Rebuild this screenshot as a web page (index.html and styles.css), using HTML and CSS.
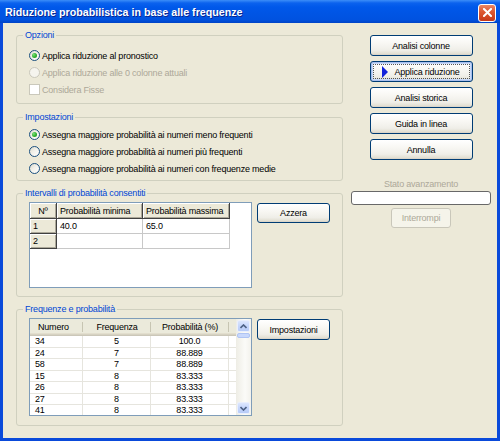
FILE: index.html
```html
<!DOCTYPE html>
<html lang="it">
<head>
<meta charset="utf-8">
<title>Riduzione probabilistica in base alle frequenze</title>
<link rel="stylesheet" href="styles.css">
</head>
<body>
<div class="window">
  <div class="titlebar">
    <span class="title">Riduzione probabilistica in base alle frequenze</span>
    <span class="close">
      <svg width="9" height="9" viewBox="0 0 9 9"><path d="M1 1 L8 8 M8 1 L1 8" stroke="#fff" stroke-width="2" stroke-linecap="square" fill="none"/></svg>
    </span>
  </div>
  <div class="client">
    <div class="left">
      <fieldset class="group g-opzioni">
        <legend>Opzioni</legend>
        <div class="opt"><span class="radio checked"></span>Applica riduzione al pronostico</div>
        <div class="opt disabled"><span class="radio"></span>Applica riduzione alle 0 colonne attuali</div>
        <div class="opt disabled"><span class="check"></span>Considera Fisse</div>
      </fieldset>
      <fieldset class="group g-impostazioni">
        <legend>Impostazioni</legend>
        <div class="opt"><span class="radio checked"></span>Assegna maggiore probabilità ai numeri meno frequenti</div>
        <div class="opt"><span class="radio"></span>Assegna maggiore probabilità ai numeri più frequenti</div>
        <div class="opt"><span class="radio"></span>Assegna maggiore probabilità ai numeri con frequenze medie</div>
      </fieldset>
      <fieldset class="group g-intervalli">
        <legend>Intervalli di probabilità consentiti</legend>
        <div class="group-row">
          <div class="sgrid">
            <div class="sgrid-table">
              <div class="fc center">Nº</div>
              <div class="fc">Probabilità minima</div>
              <div class="fc">Probabilità massima</div>
              <div class="fc">1</div>
              <div class="dc">40.0</div>
              <div class="dc">65.0</div>
              <div class="fc">2</div>
              <div class="dc"></div>
              <div class="dc"></div>
            </div>
          </div>
          <button class="btn btn-side">Azzera</button>
        </div>
      </fieldset>
      <fieldset class="group g-frequenze">
        <legend>Frequenze e probabilità</legend>
        <div class="group-row">
          <div class="lv">
            <div class="lv-main">
              <div class="lv-head">
                <div class="hc c1 left-text">Numero</div>
                <div class="hc c2">Frequenza</div>
                <div class="hc c3">Probabilità (%)</div>
                <div class="hc filler"></div>
              </div>
              <div class="lv-row"><div class="lc c1 left-text">34</div><div class="lc c2">5</div><div class="lc c3">100.0</div><div class="lc filler"></div></div>
              <div class="lv-row"><div class="lc c1 left-text">24</div><div class="lc c2">7</div><div class="lc c3">88.889</div><div class="lc filler"></div></div>
              <div class="lv-row"><div class="lc c1 left-text">58</div><div class="lc c2">7</div><div class="lc c3">88.889</div><div class="lc filler"></div></div>
              <div class="lv-row"><div class="lc c1 left-text">15</div><div class="lc c2">8</div><div class="lc c3">83.333</div><div class="lc filler"></div></div>
              <div class="lv-row"><div class="lc c1 left-text">26</div><div class="lc c2">8</div><div class="lc c3">83.333</div><div class="lc filler"></div></div>
              <div class="lv-row"><div class="lc c1 left-text">27</div><div class="lc c2">8</div><div class="lc c3">83.333</div><div class="lc filler"></div></div>
              <div class="lv-row"><div class="lc c1 left-text">41</div><div class="lc c2">8</div><div class="lc c3">83.333</div><div class="lc filler"></div></div>
            </div>
            <div class="sb">
              <div class="sb-btn">
                <svg width="7" height="5" viewBox="0 0 7 5"><path d="M0.5 4 L3.5 1 L6.5 4" stroke="#4D6185" stroke-width="1.6" fill="none"/></svg>
              </div>
              <div class="sb-thumb"></div>
              <div class="sb-track"></div>
              <div class="sb-btn">
                <svg width="7" height="5" viewBox="0 0 7 5"><path d="M0.5 1 L3.5 4 L6.5 1" stroke="#4D6185" stroke-width="1.6" fill="none"/></svg>
              </div>
            </div>
          </div>
          <button class="btn btn-side btn-tall">Impostazioni</button>
        </div>
      </fieldset>
    </div>
    <div class="right">
      <button class="btn btn-main">Analisi colonne</button>
      <button class="btn btn-main btn-default"><span class="arrow"></span>Applica riduzione</button>
      <button class="btn btn-main">Analisi storica</button>
      <button class="btn btn-main">Guida in linea</button>
      <button class="btn btn-main">Annulla</button>
      <div class="progress-label">Stato avanzamento</div>
      <div class="progress"></div>
      <button class="btn btn-disabled">Interrompi</button>
    </div>
  </div>
</div>
</body>
</html>
```
FILE: styles.css
```css
* { box-sizing: border-box; }
html, body { margin: 0; padding: 0; }
body {
  width: 500px;
  height: 441px;
  overflow: hidden;
  background: #fff;
  font-family: "Liberation Sans", Arial, sans-serif;
  font-size: 9px;
  letter-spacing: -0.2px;
  color: #000;
}
.window {
  width: 500px;
  height: 441px;
  display: flex;
  flex-direction: column;
}
.titlebar {
  height: 23px;
  display: flex;
  align-items: center;
  padding: 0 4px 0 5px;
  background: linear-gradient(180deg, #3C8EF8 0px, #0B62EE 3px, #0058EA 7px, #0055E5 55%, #0052E0 85%, #0043C6 100%);
}
.title {
  flex: 1;
  color: #fff;
  font-weight: bold;
  font-size: 10.7px;
  letter-spacing: 0;
  text-shadow: 1px 1px 0 #0A2790;
}
.close {
  width: 18px;
  height: 18px;
  margin-top: 2px;
  border: 1px solid #fff;
  border-radius: 3px;
  background: linear-gradient(180deg, #E98866 0%, #DD5A33 40%, #CF4420 80%, #C4391A 100%);
  display: flex;
  align-items: center;
  justify-content: center;
}
.client {
  flex: 1;
  display: flex;
  background: #ECE9D8;
  border: 3px solid #0A4ADA;
  border-top: 0;
  padding: 6px 6px 0 13px;
}
.left {
  width: 327px;
  display: flex;
  flex-direction: column;
}
.right {
  width: 140px;
  margin-left: 8px;
  padding-top: 6px;
  display: flex;
  flex-direction: column;
  align-items: center;
}

/* group boxes */
.group {
  margin: 0;
  min-width: 0;
  border: 1px solid #D0D0BF;
  border-radius: 3px;
  padding: 0 8px 0 12px;
}
.group legend {
  font-size: 9px;
  line-height: 13px;
  color: #0046D5;
  padding: 0 2px;
  margin-left: -6px;
}
.g-opzioni { padding-top: 5px; padding-bottom: 5px; }
.g-impostazioni { margin-top: 7px; padding-top: 2px; padding-bottom: 3px; }
.g-intervalli { margin-top: 6px; padding-top: 2px; padding-bottom: 8px; }
.g-frequenze { margin-top: 6px; padding-top: 2px; padding-bottom: 9px; }
.group-row {
  display: flex;
  align-items: flex-start;
}

/* options */
.opt {
  height: 17px;
  display: flex;
  align-items: center;
  white-space: nowrap;
}
.opt.disabled { color: #ACA899; }
.radio {
  width: 11px;
  height: 11px;
  margin-right: 2px;
  border: 1px solid #1C5180;
  border-radius: 50%;
  background: linear-gradient(135deg, #DCD9CB 0%, #F2F1EA 45%, #FFFFFF 100%);
  display: flex;
  align-items: center;
  justify-content: center;
  flex: none;
}
.radio.checked::after {
  content: "";
  width: 5px;
  height: 5px;
  border-radius: 50%;
  background: radial-gradient(circle at 35% 35%, #7BE07A 0%, #2DAF2D 55%, #1C8E1C 100%);
}
.opt.disabled .radio {
  border-color: #CAC8BB;
  background: #F5F4EE;
}
.check {
  width: 11px;
  height: 11px;
  margin-right: 2px;
  border: 1px solid #CAC8BB;
  background: #FFFFFF;
  flex: none;
}

/* string grid */
.sgrid {
  width: 223px;
  height: 86px;
  border: 1px solid #7F9DB9;
  background: #fff;
}
.sgrid-table {
  display: grid;
  grid-template-columns: 27px 86px 87px;
  grid-template-rows: 16px 15px 15px;
  width: 200px;
}
.fc, .dc {
  padding-left: 3px;
  white-space: nowrap;
  overflow: hidden;
  display: flex;
  align-items: center;
}
.fc {
  background: #ECE9D8;
  border-right: 1px solid #404040;
  border-bottom: 1px solid #404040;
  box-shadow: inset 1px 1px 0 #FFFFFF, inset -1px -1px 0 #ACA899;
}
.fc.center { justify-content: center; padding-left: 0; }
.dc {
  border-right: 1px solid #C8C8C8;
  border-bottom: 1px solid #C8C8C8;
}

/* buttons */
.btn {
  font: inherit;
  letter-spacing: inherit;
  color: #000;
  padding: 0;
  border: 1px solid #003C74;
  border-radius: 3px;
  background: linear-gradient(180deg, #FFFFFF 0%, #F8F7F3 40%, #EFEEE8 75%, #E3E0D4 92%, #D6D0C5 100%);
  display: flex;
  align-items: center;
  justify-content: center;
  white-space: nowrap;
}
.btn-main {
  width: 103px;
  height: 21px;
  margin-bottom: 5px;
}
.btn-side {
  width: 73px;
  height: 20px;
  margin-left: 5px;
  margin-top: 1px;
}
.btn-tall { height: 21px; }
.btn-default {
  box-shadow: inset 0 0 0 1px #A8BFEE, inset 0 0 0 2px #C9DAF8;
  outline: 1px dotted #555;
  outline-offset: -4px;
}
.arrow {
  width: 0;
  height: 0;
  border-top: 6px solid transparent;
  border-bottom: 6px solid transparent;
  border-left: 6px solid #1222DA;
  margin-right: 6px;
}
.btn-disabled {
  width: 60px;
  height: 20px;
  margin-top: 3px;
  border-color: #C9C7BA;
  background: #F5F4EA;
  color: #ACA899;
}
.progress-label {
  margin-top: 13px;
  line-height: 13px;
  color: #ACA899;
}
.progress {
  width: 140px;
  height: 14px;
  border: 1px solid #686868;
  border-radius: 3px;
  background: #fff;
}

/* list view */
.lv {
  width: 223px;
  height: 98px;
  border: 1px solid #7F9DB9;
  background: #fff;
  display: flex;
}
.lv-main {
  flex: 1;
  overflow: hidden;
}
.lv-head {
  display: flex;
  height: 17px;
  background: #EBEADB;
  box-shadow: inset 0 -1px 0 #CBC7B8, inset 0 -2px 0 #D6D2C2, inset 0 -3px 0 #E2DECD;
}
.hc {
  display: flex;
  align-items: center;
  justify-content: center;
  padding-bottom: 2px;
  background-image: linear-gradient(#C7C5B2, #C7C5B2);
  background-size: 1px 10px;
  background-position: right 3px;
  background-repeat: no-repeat;
  white-space: nowrap;
}
.hc.filler { background-image: none; }
.c1 { width: 53px; flex: none; }
.c2 { width: 68px; flex: none; }
.c3 { width: 78px; flex: none; }
.filler { flex: 1; }
.lv-row {
  display: flex;
  height: 11.5px;
}
.lc {
  display: flex;
  align-items: center;
  justify-content: center;
  border-right: 1px solid #E6E5DE;
  border-bottom: 1px solid #E6E5DE;
  line-height: 10px;
  white-space: nowrap;
}
.hc.left-text { justify-content: flex-start; padding-left: 8px; }
.lc.left-text { justify-content: flex-start; padding-left: 5px; }
.lc.filler { border-right: 0; }

/* scrollbar */
.sb {
  width: 15px;
  flex: none;
  display: flex;
  flex-direction: column;
  padding: 1px;
  background: linear-gradient(90deg, #EEEDE5 0%, #FBFBF8 60%, #F3F2EC 100%);
}
.sb-btn {
  height: 12px;
  border: 1px solid #E9EFFD;
  border-radius: 2px;
  background: linear-gradient(180deg, #DCE6FD 0%, #C5D6FC 50%, #B7CBF7 100%);
  display: flex;
  align-items: center;
  justify-content: center;
}
.sb-thumb {
  height: 5px;
  margin-top: 1px;
  border: 1px solid #AFC4F3;
  border-radius: 2px;
  background: #C8D8FC;
}
.sb-track { flex: 1; }
```
